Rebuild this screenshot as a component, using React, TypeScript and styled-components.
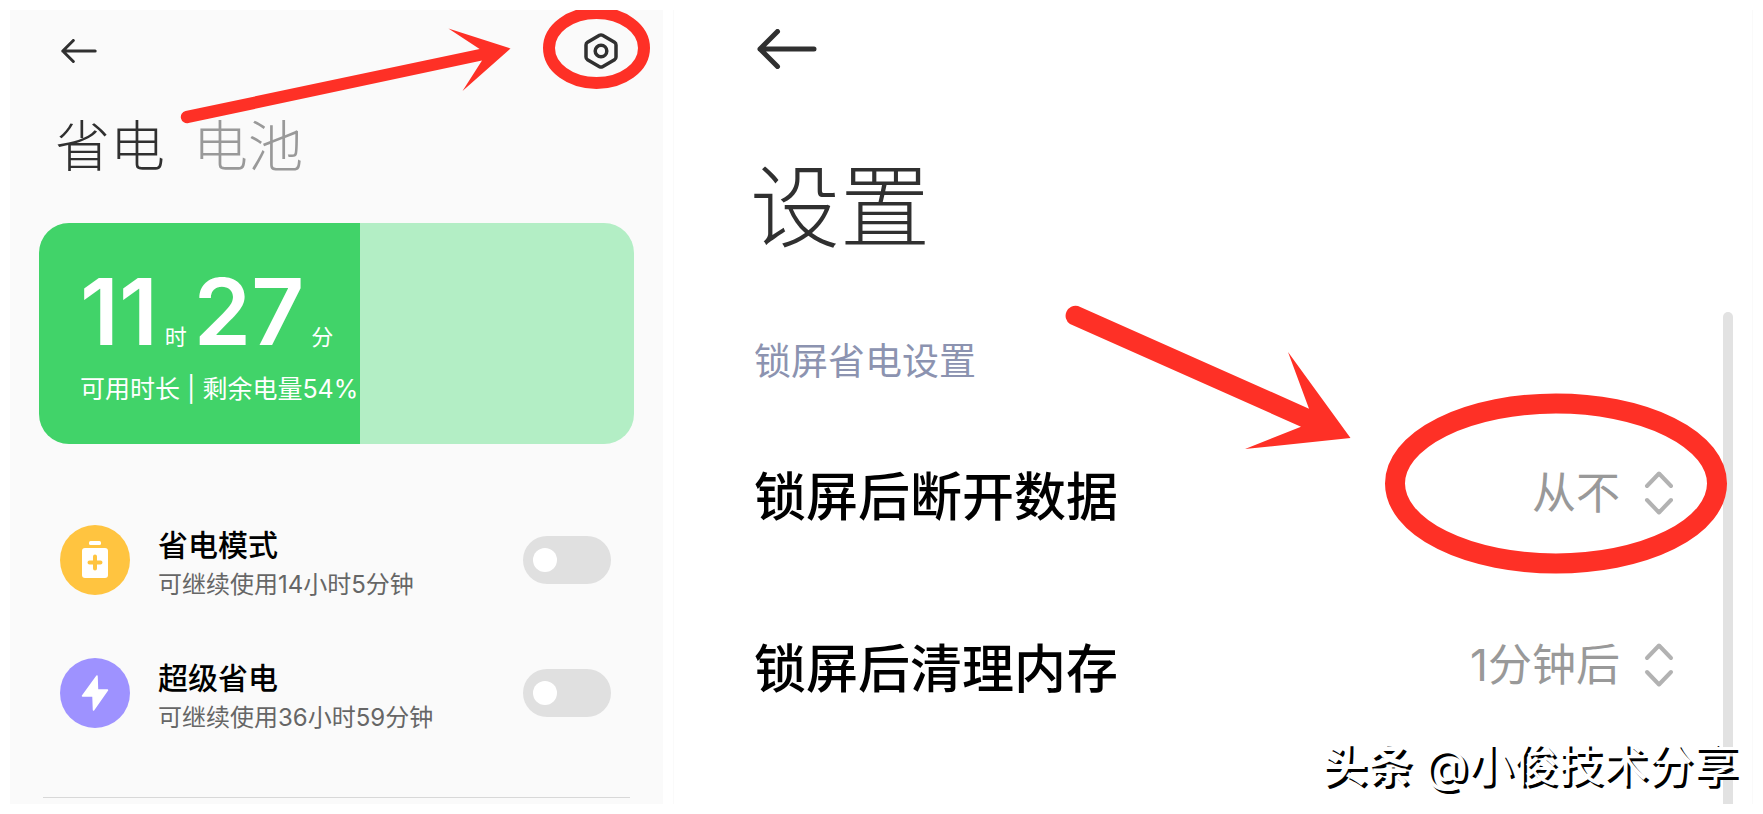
import React from "react";
import styled, { createGlobalStyle } from "styled-components";

const RED = "#fe3026";

const GlobalStyle = createGlobalStyle`
  *, *::before, *::after { box-sizing: border-box; }
  body {
    margin: 0;
    background: #fff;
    font-family: Inter, "Noto Sans CJK SC", sans-serif;
    color: #000;
  }
  h1, h2, p { margin: 0; font-weight: 400; }
  button { padding: 0; border: 0; background: none; font: inherit; color: inherit; cursor: pointer; }
`;

const Page = styled.main`
  display: grid;
  grid-template-columns: minmax(0, 653fr) minmax(0, 1080fr);
  gap: 10px;
  min-height: 100vh;
  padding: 10px;
`;

const Panel = styled.section<{ $tint: string }>`
  position: relative;
  display: flex;
  flex-direction: column;
  overflow: hidden;
  background: ${(p) => p.$tint};
`;

const SaverPanel = styled(Panel)`
  padding: 0 29px;
`;

const SettingsPanel = styled(Panel)`
  padding: 0 19px 0 76px;
  border: solid #fafafa;
  border-width: 0 1px;
`;

const TopBar = styled.header`
  display: flex;
  align-items: center;
  justify-content: space-between;
`;

const SaverBar = styled(TopBar)`
  height: 82px;
  padding: 0 16px 0 22px;
`;

const SettingsBar = styled(TopBar)`
  height: 78px;
  padding-left: 7px;
`;

const IconButton = styled.button`
  display: flex;
`;

const Tabs = styled.nav`
  display: flex;
  gap: 28px;
  padding: 14px 16px 0;
`;

const Tab = styled.button<{ $active?: boolean }>`
  font-size: 55px;
  line-height: 80px;
  font-weight: 300;
  color: ${(p) => (p.$active ? "#303030" : "#999")};
`;

const BatteryCard = styled.section<{ $level: number }>`
  display: flex;
  flex-direction: column;
  justify-content: center;
  height: 221px;
  margin-top: 37px;
  padding: 22px 41px 0;
  border-radius: 30px;
  color: #fff;
  background: linear-gradient(to right, #41d369 ${(p) => p.$level}%, #b3eec5 ${(p) => p.$level}%);
`;

const Remaining = styled.p`
  display: flex;
  align-items: baseline;
  gap: 7px;
  line-height: 64px;
`;

const BigNumber = styled.span`
  font-size: 92px;
  font-weight: 600;
`;

const Unit = styled.span`
  font-size: 22px;
`;

const CardNote = styled.p`
  font-size: 25px;
  line-height: 40px;
  white-space: nowrap;
`;

const ModeList = styled.div`
  display: flex;
  flex-direction: column;
  padding: 49px 23px 38px 21px;
`;

const ModeRow = styled.label`
  display: flex;
  align-items: center;
  height: 133px;
  cursor: pointer;
`;

const Badge = styled.span<{ $color: string }>`
  display: flex;
  flex: none;
  width: 70px;
  height: 70px;
  margin-right: 28px;
  border-radius: 50%;
  background: ${(p) => p.$color};
`;

const ModeText = styled.span`
  display: flex;
  flex: 1;
  flex-direction: column;
  padding-top: 11px;
  white-space: nowrap;
`;

const ModeName = styled.span`
  font-size: 30px;
  line-height: 40px;
  font-weight: 500;
`;

const ModeNote = styled.span`
  font-size: 24px;
  line-height: 40px;
  color: #666;
`;

const Toggle = styled.input`
  appearance: none;
  display: flex;
  align-items: center;
  flex: none;
  width: 88px;
  height: 48px;
  margin: 0;
  padding: 0 10px;
  border-radius: 24px;
  background: #e0e0e0;
  cursor: pointer;

  &::before {
    content: "";
    width: 24px;
    height: 24px;
    border-radius: 50%;
    background: #fff;
  }
  &:checked { justify-content: flex-end; background: #41d369; }
`;

const Divider = styled.hr`
  width: calc(100% - 8px);
  margin: 0 auto;
  border: 0;
  border-top: 1px solid #d8d8d8;
`;

const Title = styled.h1`
  padding-top: 54px;
  font-size: 90px;
  line-height: 132px;
  font-weight: 300;
  color: #303030;
`;

const ScrollArea = styled.div`
  display: flex;
  flex: 1;
  margin-top: 38px;
  padding-left: 4px;
`;

const Options = styled.div`
  flex: 1;
  padding-right: 49px;
`;

const ScrollBar = styled.div`
  width: 10px;
  border-radius: 5px 5px 0 0;
  background: #e2e2e2;
`;

const GroupName = styled.h2`
  padding: 20px 0 15px;
  font-size: 37px;
  line-height: 60px;
  color: #8c93b0;
`;

const OptionRow = styled.label`
  display: flex;
  align-items: center;
  justify-content: space-between;
  height: 172px;
  cursor: pointer;
`;

const OptionName = styled.span`
  font-size: 52px;
  font-weight: 500;
  white-space: nowrap;
`;

const OptionValue = styled.span`
  display: flex;
  align-items: center;
  gap: 24px;
`;

const Select = styled.select`
  appearance: none;
  padding: 0;
  border: 0;
  background: none;
  font: inherit;
  font-size: 44px;
  line-height: 64px;
  color: #999;
  text-align-last: right;
  cursor: pointer;
`;

const Overlay = styled.svg`
  position: absolute;
  top: 0;
  right: 0;
  pointer-events: none;
`;

const Watermark = styled.p`
  position: absolute;
  right: 14px;
  bottom: 6px;
  font-size: 45px;
  line-height: 64px;
  color: #fff;
  text-shadow: 3px 3px 0 #000;
  white-space: nowrap;
`;

const BackIcon = ({ size }: { size: number }) => (
  <svg width={size} height={(size * 2) / 3} viewBox="0 0 60 40" fill="none" stroke="#303030" strokeWidth="5" strokeLinecap="round" strokeLinejoin="round">
    <path d="M57 20H3M20.500 2.500L3 20L20.500 37.500" />
  </svg>
);

const GearIcon = () => (
  <svg width="34" height="36" viewBox="0 0 34 36" fill="none" stroke="#303030" strokeWidth="3.500" strokeLinejoin="round">
    <path d="M15.500 2.300Q17 1.500 18.500 2.300L30.500 9.300Q32 10.200 32 12V24Q32 25.800 30.500 26.700L18.500 33.700Q17 34.500 15.500 33.700L3.500 26.700Q2 25.800 2 24V12Q2 10.200 3.500 9.300Z" />
    <circle cx="17" cy="18" r="5.800" />
  </svg>
);

const BatteryIcon = () => (
  <svg width="70" height="70" viewBox="0 0 70 70" fill="#fff">
    <rect x="29" y="16" width="12" height="4" rx="1.500" />
    <rect x="22" y="23" width="26" height="30" rx="3" />
    <path d="M35 31.500V43.500M29.500 37.500H40.500" stroke="#ffc440" strokeWidth="4" strokeLinecap="round" />
  </svg>
);

const BoltIcon = () => (
  <svg width="70" height="70" viewBox="0 0 70 70" fill="#fff" stroke="#fff" strokeWidth="1.500" strokeLinejoin="round">
    <path d="M37 18L22.500 38H33L33.500 52L47.500 32H37.500Z" />
  </svg>
);

const StepIcon = () => (
  <svg width="30" height="46" viewBox="0 0 30 46" fill="none" stroke="#b2b2b2" strokeWidth="4" strokeLinecap="round" strokeLinejoin="round">
    <path d="M3 16L15 3.500L27 16M3 30L15 42.500L27 30" />
  </svg>
);

const modes = [
  { name: "省电模式", note: "可继续使用14小时5分钟", color: "#ffc440", icon: <BatteryIcon /> },
  { name: "超级省电", note: "可继续使用36小时59分钟", color: "#9e92ff", icon: <BoltIcon /> },
];

const options = [
  { name: "锁屏后断开数据", value: "从不" },
  { name: "锁屏后清理内存", value: "1分钟后" },
];

export default function App() {
  return (
    <>
      <GlobalStyle />
      <Page>
        <SaverPanel $tint="#fafafa">
          <SaverBar>
            <IconButton aria-label="返回"><BackIcon size={36} /></IconButton>
            <IconButton aria-label="设置"><GearIcon /></IconButton>
          </SaverBar>
          <Tabs>
            <Tab $active>省电</Tab>
            <Tab>电池</Tab>
          </Tabs>
          <BatteryCard $level={54}>
            <Remaining>
              <BigNumber>11</BigNumber>
              <Unit>时</Unit>
              <BigNumber>27</BigNumber>
              <Unit>分</Unit>
            </Remaining>
            <CardNote>可用时长 | 剩余电量54%</CardNote>
          </BatteryCard>
          <ModeList>
            {modes.map((m) => (
              <ModeRow key={m.name}>
                <Badge $color={m.color}>{m.icon}</Badge>
                <ModeText>
                  <ModeName>{m.name}</ModeName>
                  <ModeNote>{m.note}</ModeNote>
                </ModeText>
                <Toggle type="checkbox" role="switch" />
              </ModeRow>
            ))}
          </ModeList>
          <Divider />
          <Overlay width="490" height="130" viewBox="0 0 490 130" aria-hidden="true">
            <ellipse cx="423.500" cy="38" rx="47.500" ry="35" fill="none" stroke={RED} strokeWidth="12" />
            <path fill={RED} d="M12.500 101L306.600 39L275.400 18.500L337.500 38.500L289.500 81L309 50.500L15.500 113A6 6 0 0 1 12.500 101Z" />
          </Overlay>
        </SaverPanel>

        <SettingsPanel $tint="#fff">
          <SettingsBar>
            <IconButton aria-label="返回"><BackIcon size={60} /></IconButton>
          </SettingsBar>
          <Title>设置</Title>
          <ScrollArea>
            <Options>
              <GroupName>锁屏省电设置</GroupName>
              {options.map((o) => (
                <OptionRow key={o.name}>
                  <OptionName>{o.name}</OptionName>
                  <OptionValue>
                    <Select defaultValue={o.value}>
                      <option>{o.value}</option>
                    </Select>
                    <StepIcon />
                  </OptionValue>
                </OptionRow>
              ))}
            </Options>
            <ScrollBar />
          </ScrollArea>
          <Overlay width="700" height="600" viewBox="0 0 700 600" aria-hidden="true">
            <ellipse cx="504" cy="473.500" rx="161" ry="80" fill="none" stroke={RED} strokeWidth="20" />
            <path fill={RED} d="M26 296L257 398.700L236 342L298.500 428L193 439L249 416.700L18 314A10 10 0 0 1 26 296Z" />
          </Overlay>
          <Watermark><b>头条</b> @小俊技术分享</Watermark>
        </SettingsPanel>
      </Page>
    </>
  );
}
